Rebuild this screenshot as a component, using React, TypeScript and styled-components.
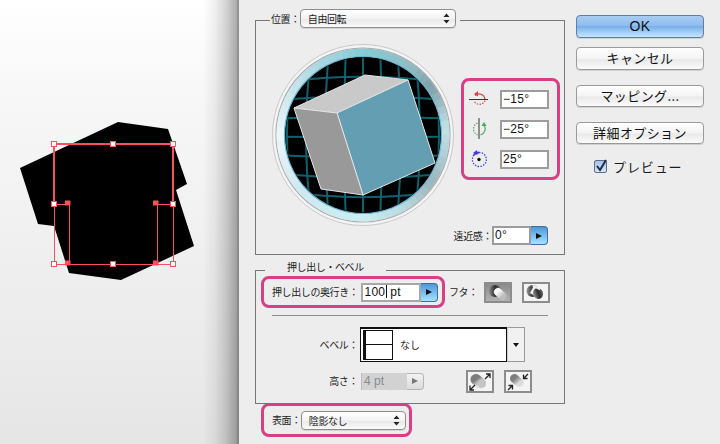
import React from "react";
import styled, { createGlobalStyle } from "styled-components";

const Global = createGlobalStyle`
  html, body { margin: 0; padding: 0; width: 720px; height: 444px; overflow: hidden; }
  body { font-family: "Liberation Sans", "Noto Sans CJK JP", sans-serif; font-size: 11px; color: #1c1c1c; }
`;

const Page = styled.div`
  display: flex;
  width: 720px;
  height: 444px;
`;
const Canvas = styled.div`
  width: 240px;
  height: 444px;
  flex: none;
  background:
    linear-gradient(to right, rgba(0,0,0,0) 203px, rgba(0,0,0,.06) 215px, rgba(0,0,0,.17) 226px, rgba(0,0,0,.33) 237px, rgba(0,0,0,.42) 237px, rgba(0,0,0,.42) 239px, #ededed 239px),
    linear-gradient(to bottom, #ffffff 0, #f7f7f7 100px, #e6e6e6 444px);
  svg { display: block; }
`;
const Dialog = styled.div`
  flex: 1;
  display: flex;
  background: #ededed;
  padding: 0 0 0 15px;
  box-sizing: border-box;
`;
const MainColumn = styled.div`
  width: 310px;
  flex: none;
  padding-top: 20px;
`;
const Panel = styled.div<{ $h: number; $mt?: number }>`
  border: 1px solid #777;
  height: ${p => p.$h}px;
  margin-top: ${p => p.$mt ?? 0}px;
  box-sizing: border-box;
`;
const PositionLegend = styled.div`
  display: flex;
  align-items: center;
  height: 19px;
  width: fit-content;
  margin: -12px 0 0 14px;
  padding: 0 4px 0 1px;
  box-sizing: border-box;
  background: #ededed;
`;
const Label = styled.span<{ $w?: number }>`
  font-family: "Noto Sans CJK JP", sans-serif;
  font-size: 10px;
  letter-spacing: -.4px;
  line-height: 14px;
  white-space: nowrap;
  flex: none;
  ${p => p.$w ? `width: ${p.$w}px; text-align: right;` : ""}
`;
const Select = styled.div<{ $w: number }>`
  width: ${p => p.$w}px;
  height: 19px;
  flex: none;
  box-sizing: border-box;
  border: 1px solid #8e8e8e;
  border-radius: 4px;
  background: linear-gradient(to bottom, #ffffff, #f3f3f3 50%, #e9e9e9 55%, #fafafa);
  box-shadow: 0 1px 0 rgba(0,0,0,.1);
  display: flex;
  align-items: center;
  justify-content: space-between;
  padding: 0 5px 0 7px;
  font-family: "Noto Sans CJK JP", sans-serif;
  font-size: 10px;
  letter-spacing: -.4px;
`;
const Updown = styled.svg`
  flex: none;
`;
const OrbitRow = styled.div`
  display: flex;
  height: 183px;
  margin-top: 15px;
  padding-left: 15px;
`;
const Sphere = styled.svg`
  width: 184px;
  height: 184px;
  flex: none;
`;
const Callout = styled.div`
  border: 3px solid #d83f85;
  border-radius: 8px;
  box-sizing: border-box;
`;
const RotationBox = styled(Callout)`
  width: 99px;
  height: 102px;
  margin: 35px 0 0 6px;
  padding: 9px 8px 0 5px;
  display: flex;
  flex-direction: column;
  gap: 12px;
`;
const RotationRow = styled.div`
  display: flex;
  align-items: center;
  justify-content: space-between;
  height: 18px;
`;
const NumberField = styled.div<{ $w: number }>`
  width: ${p => p.$w}px;
  height: 19px;
  flex: none;
  box-sizing: border-box;
  background: #fff;
  border: 2px solid #9c9c9c;
  padding-left: 1px;
  font-size: 12px;
  letter-spacing: .3px;
  line-height: 15px;
  color: #111;
  white-space: nowrap;
`;
const DepthField = styled(NumberField)`
  margin-left: 3px;
  border-color: #a8a8a8;
`;
const DepthCaret = styled.span`
  display: inline-block;
  width: 1px;
  height: 13px;
  background: #111;
  vertical-align: -2px;
  margin: 0 3px 0 1px;
`;
const PerspectiveRow = styled.div`
  display: flex;
  justify-content: flex-end;
  align-items: center;
  height: 19px;
  padding-right: 16px;
`;
const BlueStep = styled.div`
  width: 17px;
  height: 19px;
  flex: none;
  box-sizing: border-box;
  border: 1px solid #3f6f9c;
  border-left: none;
  border-radius: 0 4px 4px 0;
  background: linear-gradient(to bottom, #4f96d6, #77bdf0 50%, #a8e2fb);
  display: flex;
  align-items: center;
  justify-content: center;
`;
const GrayStep = styled(BlueStep)`
  height: 17px;
  border-color: #b5b5b5;
  background: linear-gradient(to bottom, #f2f2f2, #dcdcdc);
`;
const Triangle = styled.i<{ $c?: string }>`
  width: 0;
  height: 0;
  border-left: 6px solid ${p => p.$c ?? "#111"};
  border-top: 3.5px solid transparent;
  border-bottom: 3.5px solid transparent;
`;
const ExtrudeLegend = styled.div`
  width: 121px;
  height: 11px;
  margin: -10px 0 0 9px;
  padding-left: 22px;
  box-sizing: border-box;
  background: #ededed;
  font-family: "Noto Sans CJK JP", sans-serif;
  font-size: 10px;
  letter-spacing: -.4px;
  line-height: 11px;
  white-space: nowrap;
`;
const DepthRow = styled.div`
  display: flex;
  align-items: center;
  margin: 4px 0 0 5px;
`;
const DepthBox = styled(Callout)`
  width: 184px;
  height: 32px;
  display: flex;
  align-items: center;
  padding-left: 8px;
  flex: none;
`;
const CapLabel = styled(Label)`
  margin: 0 6px 0 4px;
`;
const Divider = styled.div`
  height: 1px;
  background: #8c8c8c;
  margin: 7px 16px 0;
`;
const BevelRow = styled.div`
  display: flex;
  align-items: center;
  margin: 11px 0 0 16px;
  height: 35px;
`;
const BevelField = styled.div`
  width: 147px;
  height: 35px;
  margin-left: 2px;
  box-sizing: border-box;
  border: 1px solid #111;
  border-top-width: 2px;
  background: #fff;
  padding: 1px 2px 2px;
  display: flex;
  align-items: center;
  gap: 7px;
  font-family: "Noto Sans CJK JP", sans-serif;
  font-size: 10px;
`;
const BevelSwatch = styled.div`
  width: 30px;
  height: 30px;
  box-sizing: border-box;
  border: 1px solid #111;
  border-left-width: 3px;
  display: flex;
  align-items: center;
  flex: none;
  &::after { content: ""; display: block; width: 100%; height: 1px; background: #111; }
`;
const BevelDrop = styled.div`
  width: 18px;
  height: 35px;
  box-sizing: border-box;
  border: 1px solid #999;
  border-left-color: #ccc;
  background: #f1f1f1;
  display: flex;
  align-items: center;
  justify-content: center;
  &::after { content: ""; border-top: 4px solid #111; border-left: 3.5px solid transparent; border-right: 3.5px solid transparent; }
`;
const HeightRow = styled.div`
  display: flex;
  align-items: center;
  margin: 7px 0 0 16px;
  height: 24px;
`;
const DisabledField = styled.div`
  width: 46px;
  height: 17px;
  margin-left: 3px;
  box-sizing: border-box;
  border-left: 1px solid #bbb;
  background: #d2d2d2;
  color: #8a8a8a;
  font-size: 12px;
  line-height: 16px;
  padding-left: 2px;
`;
const IconButton = styled.div<{ $pressed?: boolean; $ml: number; $h: number }>`
  width: 28px;
  height: ${p => p.$h}px;
  flex: none;
  margin-left: ${p => p.$ml}px;
  box-sizing: border-box;
  border: 2px solid #8c8c8c;
  background: ${p => p.$pressed ? "linear-gradient(to bottom,#8a8a8a,#b2b2b2)" : "#f4f4f4"};
  display: flex;
  svg { display: block; }
`;
const SurfaceBox = styled(Callout)`
  width: 151px;
  height: 34px;
  margin: -1px 0 0 6px;
  padding-left: 8px;
  display: flex;
  align-items: center;
`;
const SideColumn = styled.div`
  width: 128px;
  margin: 15px 0 0 11px;
  flex: none;
`;
const ActionButton = styled.div<{ $h: number; $mt: number; $primary?: boolean }>`
  height: ${p => p.$h}px;
  margin-top: ${p => p.$mt}px;
  box-sizing: border-box;
  padding-bottom: 2px;
  border: 1px solid ${p => p.$primary ? "#5d7ea6" : "#9a9a9a"};
  border-radius: 4px;
  background: ${p => p.$primary
    ? "linear-gradient(to bottom,#a9cdf3,#8fbdee 45%,#79b0ea 50%,#c5e6fb)"
    : "linear-gradient(to bottom,#ffffff,#f4f4f4 50%,#e9e9e9 55%,#fbfbfb)"};
  box-shadow: 0 1px 0 rgba(0,0,0,.12);
  display: flex;
  align-items: center;
  justify-content: center;
  font-family: "Noto Sans CJK JP", "Liberation Sans", sans-serif;
  font-size: 13px;
  letter-spacing: .4px;
  color: #111;
`;
const OkText = styled.span`
  font-family: "Liberation Sans", sans-serif;
  font-size: 14px;
`;
const PreviewRow = styled.div`
  display: flex;
  align-items: center;
  gap: 6px;
  margin: 13px 0 0 18px;
  font-family: "Noto Sans CJK JP", sans-serif;
  font-size: 13px;
  letter-spacing: .9px;
`;
const Check = styled.div`
  width: 13px;
  height: 13px;
  flex: none;
  box-sizing: border-box;
  border: 1px solid #5e6f8a;
  border-radius: 2px;
  background: linear-gradient(to bottom,#a7c3e6,#d5e6f7);
  svg { display: block; overflow: visible; }
`;

const UpDownIcon = () => (
  <Updown width="7" height="11" viewBox="0 0 7 11">
    <path d="M3.5 0.5 L6.5 4 H0.5Z M3.5 10.5 L6.5 7 H0.5Z" fill="#222" />
  </Updown>
);

const verticals = [-76, -57, -38, -19, 0, 19, 38, 57, 76];
const horizontals = [-57, -38, -18, 2, 22, 42, 61];

const ringStops: [number, number[]][] = [
  [0, [0x86, 0xcb, 0xd6]], [35, [0x8f, 0xbc, 0xc4]], [55, [0x7f, 0xa0, 0xa8]], [85, [0xc3, 0xe3, 0xea]],
  [125, [0x9a, 0xb6, 0xbd]], [150, [0xb9, 0xd8, 0xde]], [180, [0xc9, 0xee, 0xf2]], [230, [0xcf, 0xe9, 0xf0]],
  [270, [0xec, 0xf7, 0xfa]], [320, [0xb6, 0xdb, 0xe4]], [360, [0x86, 0xcb, 0xd6]],
];
const ringColor = (a: number) => {
  const i = ringStops.findIndex(s => s[0] > a);
  const [a0, c0] = ringStops[i - 1];
  const [a1, c1] = ringStops[i];
  const t = (a - a0) / (a1 - a0);
  return `rgb(${c0.map((v, k) => Math.round(v + (c1[k] - v) * t)).join(",")})`;
};
const ringPoint = (deg: number, r: number) => {
  const rad = (deg * Math.PI) / 180;
  return `${(363 + r * Math.sin(rad)).toFixed(2)} ${(135 - r * Math.cos(rad)).toFixed(2)}`;
};
const ringSegments = Array.from({ length: 72 }, (_, i) => i * 5);

const SphereArt = () => (
  <Sphere viewBox="271 43 184 184">
    <defs>
      <clipPath id="well"><circle cx="363" cy="135" r="77.5" /></clipPath>
    </defs>
    <circle cx="363" cy="135" r="90.5" fill="#f4f4f4" stroke="#c9c9c9" />
    <circle cx="363" cy="135" r="87" fill="none" stroke="#a9a9a9" strokeWidth="1.2" />
    {ringSegments.map(a => (
      <path key={a} d={`M${ringPoint(a, 82.5)} A82.5 82.5 0 0 1 ${ringPoint(a + 5.4, 82.5)}`} fill="none" stroke={ringColor(a + 2.5)} strokeWidth="8" />
    ))}
    <circle cx="363" cy="135" r="78.5" fill="#000" stroke="#6db7d6" strokeWidth="1.2" />
    <g clipPath="url(#well)" fill="none" stroke="#0d626e" strokeWidth="2">
      {verticals.map(d => (
        <path key={d} d={`M${363 + d * 0.9} 50 Q${363 + d * 1.1} 135 ${363 + d * 0.9} 220`} />
      ))}
      {horizontals.map(d => (
        <path key={d} d={`M280 ${135 + d * 0.92} Q363 ${135 + d * 1.12} 446 ${135 + d * 0.92}`} />
      ))}
    </g>
    <g stroke="#e4e4e4" strokeWidth="1" strokeLinejoin="round">
      <polygon points="294,108 365,75 408,80 337,113" fill="#c9c9c9" />
      <polygon points="337,113 408,80 435,163 363,195" fill="#649eb3" />
      <polygon points="294,108 337,113 363,195 321,189" fill="#999999" />
    </g>
  </Sphere>
);

const XIcon = () => (
  <svg width="20" height="18" viewBox="0 0 20 18">
    <path d="M0 9.5H19" stroke="#333" strokeWidth="1" />
    <path d="M6 5.5 A6 6 0 0 1 16 9" fill="none" stroke="#e2403f" strokeWidth="1.2" />
    <path d="M9 1 L5 4 L9 6.5Z" fill="#e2403f" />
    <path d="M16 10.5 A6 6 0 0 1 5 11" fill="none" stroke="#e2403f" strokeWidth="1.2" strokeDasharray="1.4 1.4" />
  </svg>
);
const YIcon = () => (
  <svg width="20" height="22" viewBox="0 0 20 22">
    <path d="M10 0V21" stroke="#333" strokeWidth="1" />
    <path d="M8.5 5 A6.5 6.5 0 0 0 8.5 17" fill="none" stroke="#46a85a" strokeWidth="1.2" strokeDasharray="1.4 1.4" />
    <path d="M11.5 17 A6.5 6.5 0 0 0 15 7" fill="none" stroke="#46a85a" strokeWidth="1.2" />
    <path d="M12.5 8 L15 4 L17.5 8Z" fill="#46a85a" />
  </svg>
);
const ZIcon = () => (
  <svg width="20" height="18" viewBox="0 0 20 18">
    <circle cx="10" cy="9.5" r="1.7" fill="#111" />
    <path d="M5 5 A7 7 0 1 0 10 2.5" fill="none" stroke="#3f3ae6" strokeWidth="1.3" strokeDasharray="1.4 1.4" />
    <path d="M4.8 5 A7 7 0 0 1 10 2.5" fill="none" stroke="#3f3ae6" strokeWidth="1.8" />
    <path d="M8 0 L4 3 L8.5 5Z" fill="#3f3ae6" />
  </svg>
);

const CapPressed = () => (
  <svg width="24" height="17" viewBox="0 0 24 17">
    <defs>
      <linearGradient id="capDark" x1="0" y1="0" x2="1" y2="0">
        <stop offset="0" stopColor="#8c8c8c" />
        <stop offset=".5" stopColor="#2e2e2e" />
        <stop offset="1" stopColor="#555" />
      </linearGradient>
      <linearGradient id="capLight" x1="0" y1="0" x2="1" y2="1">
        <stop offset="0" stopColor="#f7f7f7" />
        <stop offset="1" stopColor="#bdbdbd" />
      </linearGradient>
    </defs>
    <circle cx="9" cy="7" r="6" fill="url(#capDark)" />
    <path d="M12 8 L16.5 12" stroke="url(#capLight)" strokeWidth="8" strokeLinecap="round" />
  </svg>
);
const CapOpen = () => (
  <svg width="24" height="17" viewBox="0 0 24 17">
    <defs>
      <linearGradient id="capDarkB" x1="0" y1="0" x2="1" y2="0">
        <stop offset="0" stopColor="#9a9a9a" />
        <stop offset=".55" stopColor="#2b2b2b" />
        <stop offset="1" stopColor="#666" />
      </linearGradient>
    </defs>
    <circle cx="8.5" cy="7" r="6" fill="url(#capDarkB)" />
    <path d="M10 1.5 L18 8 L14 14 L6 9Z" fill="#f4f4f4" />
    <ellipse cx="14" cy="9.5" rx="5" ry="5.5" fill="url(#capDarkB)" transform="rotate(-20 14 9.5)" />
    <path d="M8.5 1.5 L16 5.5" stroke="#f4f4f4" strokeWidth="1.5" />
  </svg>
);

const BevelOut = () => (
  <svg width="24" height="19" viewBox="0 0 24 19">
    <defs>
      <linearGradient id="bevelBody" x1="0" y1="0" x2="1" y2="1">
        <stop offset="0" stopColor="#7d7d7d" />
        <stop offset=".55" stopColor="#b5b5b5" />
        <stop offset="1" stopColor="#d8d8d8" />
      </linearGradient>
    </defs>
    <path d="M8 7.5 L12.5 11" stroke="url(#bevelBody)" strokeWidth="11" strokeLinecap="round" />
    <circle cx="14" cy="11.5" r="4" fill="#c4c4c4" />
    <path d="M17 7 L21.5 2.5 M18 2 H22 V6 M7 13 L2.5 17.5 M2 13.5 V18 H6" stroke="#222" fill="none" strokeWidth="1.3" />
  </svg>
);
const BevelIn = () => (
  <svg width="24" height="19" viewBox="0 0 24 19">
    <defs>
      <linearGradient id="bevelBodyB" x1="0" y1="0" x2="1" y2="1">
        <stop offset="0" stopColor="#7d7d7d" />
        <stop offset=".6" stopColor="#b0b0b0" />
        <stop offset="1" stopColor="#dcdcdc" />
      </linearGradient>
    </defs>
    <path d="M8.5 6.5 L13 10.5" stroke="url(#bevelBodyB)" strokeWidth="9" strokeLinecap="round" />
    <path d="M22 2 L17.5 6.5 M17.5 2.5 V6.5 H21.5 M2 18 L6.5 13.5 M2.5 13.5 H6.5 V17.5" stroke="#222" fill="none" strokeWidth="1.3" />
  </svg>
);

const Artwork = () => (
  <svg width="240" height="444" viewBox="0 0 240 444">
    <polygon points="20,168 118,122 168,129 187,184 176,190 194,246 121,280 69,273 54,226 38,224" fill="#000" />
    <g fill="none" stroke="#f9505a">
      <path d="M54 144H173M54 143V204M173 143V204" strokeWidth="2" />
      <path d="M54.5 204V264.5H173.5V204M54 204.5H68M69.5 204V264M157.5 204V264M157 204.5H173" strokeWidth="1" />
    </g>
    {[[54, 144], [113, 144], [173, 144], [54, 204], [173, 204], [54, 264], [113, 264], [173, 264]].map(([x, y]) => (
      <rect key={`${x}-${y}`} x={x - 2.5} y={y - 2.5} width="5" height="5" fill="#fff" stroke="#f9505a" />
    ))}
    {[[68, 203], [156, 203], [68, 263], [156, 263]].map(([x, y]) => (
      <rect key={`${x}-${y}`} x={x - 3} y={y - 2.5} width="5.5" height="5" fill="#f9505a" />
    ))}
  </svg>
);

export default function App() {
  return (
    <Page>
      <Global />
      <Canvas><Artwork /></Canvas>
      <Dialog>
        <MainColumn>
          <Panel $h={235}>
            <PositionLegend>
              <Label>位置：</Label>
              <Select $w={156}>自由回転<UpDownIcon /></Select>
            </PositionLegend>
            <OrbitRow>
              <SphereArt />
              <RotationBox>
                <RotationRow><XIcon /><NumberField $w={49}>−15°</NumberField></RotationRow>
                <RotationRow><YIcon /><NumberField $w={49}>−25°</NumberField></RotationRow>
                <RotationRow><ZIcon /><NumberField $w={49}>25°</NumberField></RotationRow>
              </RotationBox>
            </OrbitRow>
            <PerspectiveRow>
              <Label>遠近感：</Label>
              <NumberField $w={39}>0°</NumberField>
              <BlueStep><Triangle /></BlueStep>
            </PerspectiveRow>
          </Panel>
          <Panel $h={134} $mt={15}>
            <ExtrudeLegend>押し出し・ベベル</ExtrudeLegend>
            <DepthRow>
              <DepthBox>
                <Label>押し出しの奥行き：</Label>
                <DepthField $w={60}>100<DepthCaret />pt</DepthField>
                <BlueStep><Triangle /></BlueStep>
              </DepthBox>
              <CapLabel>フタ：</CapLabel>
              <IconButton $pressed $ml={0} $h={21}><CapPressed /></IconButton>
              <IconButton $ml={10} $h={21}><CapOpen /></IconButton>
            </DepthRow>
            <Divider />
            <BevelRow>
              <Label $w={86}>ベベル：</Label>
              <BevelField><BevelSwatch />なし</BevelField>
              <BevelDrop />
            </BevelRow>
            <HeightRow>
              <Label $w={86}>高さ：</Label>
              <DisabledField>4 pt</DisabledField>
              <GrayStep><Triangle $c="#777" /></GrayStep>
              <IconButton $ml={42} $h={23}><BevelOut /></IconButton>
              <IconButton $ml={10} $h={23}><BevelIn /></IconButton>
            </HeightRow>
          </Panel>
          <SurfaceBox>
            <Label>表面：</Label>
            <Select $w={105}>陰影なし<UpDownIcon /></Select>
          </SurfaceBox>
        </MainColumn>
        <SideColumn>
          <ActionButton $h={23} $mt={0} $primary><OkText>OK</OkText></ActionButton>
          <ActionButton $h={23} $mt={9}>キャンセル</ActionButton>
          <ActionButton $h={22} $mt={15}>マッピング...</ActionButton>
          <ActionButton $h={22} $mt={15}>詳細オプション</ActionButton>
          <PreviewRow>
            <Check>
              <svg width="11" height="11" viewBox="0 0 11 11">
                <path d="M2 5 L5 9 L11 -1" fill="none" stroke="#1c2c44" strokeWidth="2" />
              </svg>
            </Check>
            プレビュー
          </PreviewRow>
        </SideColumn>
      </Dialog>
    </Page>
  );
}
